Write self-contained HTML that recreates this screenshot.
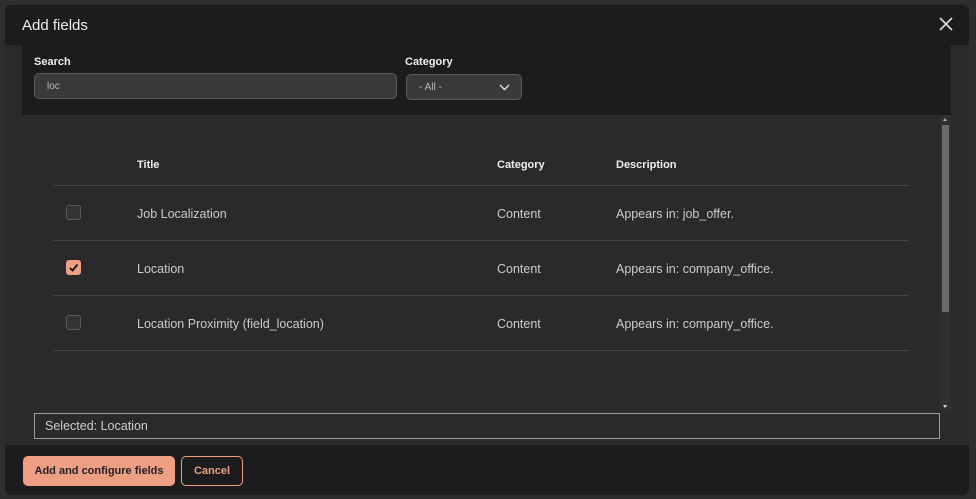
<!DOCTYPE html>
<html><head><style>
*{box-sizing:border-box;margin:0;padding:0}
body{width:976px;height:499px;background:#2e2e30;font-family:"Liberation Sans",sans-serif;position:relative;overflow:hidden;color:#ddd}
.dlg{position:absolute;left:5px;top:5px;width:964px;height:490px;background:#2a2a2c;border-radius:6px;overflow:hidden}
.hdr{position:absolute;left:0;top:0;width:964px;height:40px;background:#1c1c1e}
.hdr h1{position:absolute;left:17px;top:12px;font-size:15px;font-weight:normal;color:#eee}
.filt{position:absolute;left:17px;top:40px;width:929px;height:70px;background:#1c1c1e}
.lbl{position:absolute;font-size:11px;font-weight:bold;color:#eee}
.inp{position:absolute;background:#3a3a3d;border:1px solid #5a5a5e;border-radius:5px;font-size:10px;color:#bbb;padding-left:12px;line-height:24px}
.body{position:absolute;left:17px;top:110px;width:929px;height:297px;background:#2a2a2c}
.sb{position:absolute;left:935px;top:110px;width:11px;height:297px;background:#2f2f31}
.th{position:absolute;font-size:11px;font-weight:bold;color:#eee}
.line{position:absolute;left:53px;width:856px;height:1px;background:#444}
.td{position:absolute;font-size:12.5px;color:#ccc}
.cb{position:absolute;left:66px;width:15px;height:15px;border:1px solid #5a5a5e;border-radius:3px;background:#333}
.sel{position:absolute;left:29px;top:408px;width:906px;height:26px;border:1px solid #999;background:#2a2a2c;font-size:12.5px;color:#ccc;padding-left:10px;line-height:25px}
.ftr{position:absolute;left:0;top:440px;width:964px;height:50px;background:#1c1c1e}
.b1{position:absolute;left:18px;top:11px;width:152px;height:30px;background:#ee9f83;border-radius:5px;font-size:11px;font-weight:bold;color:#222;text-align:center;line-height:31px}
.b2{position:absolute;left:176px;top:11px;width:62px;height:30px;border:1.5px solid #ee9f83;border-radius:5px;font-size:11px;font-weight:bold;color:#ee9f83;text-align:center;line-height:28px}
</style></head><body>
<div class="dlg">
<div class="hdr"><h1>Add fields</h1>
<svg style="position:absolute;left:934px;top:12px" width="14" height="14"><path d="M1 1L13 13M13 1L1 13" stroke="#ddd" stroke-width="1.6"/></svg></div>
<div class="filt"></div>
<div class="body"></div>
<div class="sb"><div style="position:absolute;left:2px;top:10px;width:7px;height:187px;background:#6a6a6c"></div>
<div style="position:absolute;left:3px;top:3px;border:2.5px solid transparent;border-bottom:3px solid #aaa;border-top:0"></div>
<div style="position:absolute;left:3px;top:290px;border:2.5px solid transparent;border-top:3px solid #ddd;border-bottom:0"></div></div>
</div>
<div class="lbl" style="left:34px;top:56px">Search</div>
<div class="inp" style="left:34px;top:73px;width:363px;height:26px;line-height:26px">loc</div>
<div class="lbl" style="left:405px;top:56px">Category</div>
<div class="inp" style="left:406px;top:74px;width:116px;height:26px;line-height:26px">- All -
<svg style="position:absolute;left:92px;top:9px" width="11" height="7"><path d="M1 1L5.5 5.5L10 1" stroke="#ddd" stroke-width="1.5" fill="none"/></svg></div>
<div class="th" style="left:137px;top:159px">Title</div>
<div class="th" style="left:497px;top:159px">Category</div>
<div class="th" style="left:616px;top:159px">Description</div>
<div class="line" style="top:185px"></div>
<div class="line" style="top:240px"></div>
<div class="line" style="top:295px"></div>
<div class="line" style="top:350px"></div>
<div class="cb" style="top:205px"></div>
<div class="cb" style="top:260px;background:#ee9f83;border-color:#ee9f83"><svg width="13" height="13" style="position:absolute;left:0;top:0"><path d="M3 7L5.5 9.5L10.5 3.5" stroke="#111" stroke-width="1.8" fill="none"/></svg></div>
<div class="cb" style="top:315px"></div>
<div class="td" style="left:137px;top:207px">Job Localization</div>
<div class="td" style="left:497px;top:207px">Content</div>
<div class="td" style="left:616px;top:207px">Appears in: job_offer.</div>
<div class="td" style="left:137px;top:262px">Location</div>
<div class="td" style="left:497px;top:262px">Content</div>
<div class="td" style="left:616px;top:262px">Appears in: company_office.</div>
<div class="td" style="left:137px;top:317px">Location Proximity (field_location)</div>
<div class="td" style="left:497px;top:317px">Content</div>
<div class="td" style="left:616px;top:317px">Appears in: company_office.</div>
<div class="dlg" style="background:none;pointer-events:none">
<div class="sel">Selected: Location</div>
<div class="ftr"><div class="b1">Add and configure fields</div><div class="b2">Cancel</div></div>
</div>
</body></html>
